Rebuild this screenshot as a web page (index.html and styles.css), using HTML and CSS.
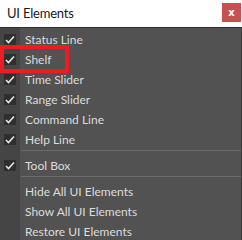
FILE: index.html
```html
<!DOCTYPE html>
<html lang="en">
<head>
    <meta charset="UTF-8">
    <title>UI Elements</title>
    <link rel="stylesheet" href="styles.css">
</head>
<body>
    <!-- 타이틀 바 -->
    <div class="titlebar">
        <div class="title">UI Elements</div>
        <div class="close">x</div>
    </div>

    <!-- 메뉴 -->
    <div class="menu">
        <div class="row"><span class="check"><svg viewBox="0 0 12 11"><path d="M2 6l2.5 2.5L10 2.5"/></svg></span><span class="label">Status Line</span></div>
        <div class="row"><span class="check"><svg viewBox="0 0 12 11"><path d="M2 6l2.5 2.5L10 2.5"/></svg></span><span class="label">Shelf</span></div>
        <div class="row"><span class="check"><svg viewBox="0 0 12 11"><path d="M2 6l2.5 2.5L10 2.5"/></svg></span><span class="label">Time Slider</span></div>
        <div class="row"><span class="check"><svg viewBox="0 0 12 11"><path d="M2 6l2.5 2.5L10 2.5"/></svg></span><span class="label">Range Slider</span></div>
        <div class="row"><span class="check"><svg viewBox="0 0 12 11"><path d="M2 6l2.5 2.5L10 2.5"/></svg></span><span class="label">Command Line</span></div>
        <div class="row"><span class="check"><svg viewBox="0 0 12 11"><path d="M2 6l2.5 2.5L10 2.5"/></svg></span><span class="label">Help Line</span></div>
        <div class="separator"></div>
        <div class="row"><span class="check"><svg viewBox="0 0 12 11"><path d="M2 6l2.5 2.5L10 2.5"/></svg></span><span class="label">Tool Box</span></div>
        <div class="separator"></div>
        <div class="row"><span class="blank"></span><span class="label">Hide All UI Elements</span></div>
        <div class="row"><span class="blank"></span><span class="label">Show All UI Elements</span></div>
        <div class="row"><span class="blank"></span><span class="label">Restore UI Elements</span></div>
    </div>

    <!-- 강조 표시 -->
    <div class="highlight"></div>
</body>
</html>
```

FILE: styles.css
```css
/* 기본 스타일 */
* {
    margin: 0;
    padding: 0;
    box-sizing: border-box;
}

body {
    position: relative;
    width: 242px;
    height: 240px;
    overflow: hidden;
    background-color: #525252;
    font-family: 'Lato', sans-serif;
}

/* 타이틀 바 */
.titlebar {
    display: flex;
    align-items: center;
    justify-content: space-between;
    height: 28px;
    padding: 0 1px 0 7px;
    background-color: #ffffff;
    border-bottom: 1px solid #2e2e2e;
}

.title {
    font-size: 13px;
    letter-spacing: -0.2px;
    color: #1a1a1a;
    margin-top: -2px;
}

.close {
    width: 19px;
    height: 19px;
    margin-top: -3px;
    display: flex;
    align-items: center;
    justify-content: center;
    background-color: #c75050;
    color: #ffffff;
    font-family: 'DejaVu Sans', sans-serif;
    font-size: 10px;
    font-weight: bold;
}

/* 메뉴 */
.menu {
    height: 212px;
    padding-top: 1px;
    background: linear-gradient(to right, #454545 20px, #525252 20px);
    border-right: 1px solid #3a3a3a;
}

.row {
    display: flex;
    align-items: center;
    height: 20px;
}

.check,
.blank {
    width: 20px;
    height: 20px;
    display: flex;
    align-items: center;
    justify-content: center;
}

.check svg {
    width: 12px;
    height: 11px;
    background-color: #2f2f2f;
    fill: none;
    stroke: #e6e6e6;
    stroke-width: 1.6;
}

.label {
    padding-left: 5px;
    font-size: 12px;
    color: #dcdcdc;
}

.separator {
    height: 1px;
    margin: 1px 0 4px 21px;
    background-color: #6c6c6c;
}

/* 빨간 강조 상자 */
.highlight {
    position: absolute;
    left: 0;
    top: 45px;
    width: 69px;
    height: 28px;
    border: 4px solid #ed1c24;
}
```
